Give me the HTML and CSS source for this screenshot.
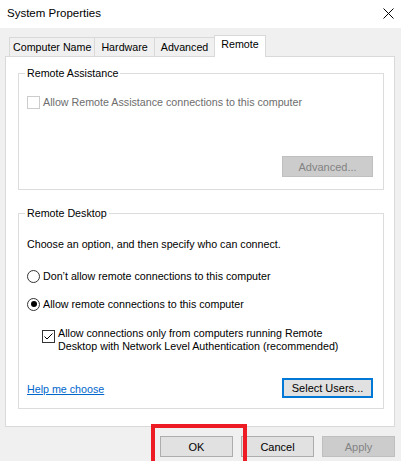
FILE: index.html
```html
<!DOCTYPE html>
<html>
<head lang="en">
    <meta charset="UTF-8">
    <title>System Properties</title>
    <link rel="stylesheet" href="styles.css">
</head>
<body>
<div id="window">
    <div class="titlebar">
        <span class="title">System Properties</span>
        <span class="close">
            <svg width="11" height="11" viewBox="0 0 11 11"><path d="M0.5 0.5L10.5 10.5M10.5 0.5L0.5 10.5" stroke="#000" stroke-width="1" fill="none"/></svg>
        </span>
    </div>
    <div class="dialog">
        <ul class="tabs">
            <li>Computer Name</li>
            <li>Hardware</li>
            <li>Advanced</li>
            <li class="active">Remote</li>
        </ul>
        <div class="panel">
            <fieldset class="group">
                <legend>Remote Assistance</legend>
                <label class="check disabled first"><span class="box"></span>Allow Remote Assistance connections to this computer</label>
                <div class="actions assist">
                    <button class="btn wide" disabled>Advanced...</button>
                </div>
            </fieldset>
            <fieldset class="group desktop">
                <legend>Remote Desktop</legend>
                <p class="hint">Choose an option, and then specify who can connect.</p>
                <label class="radio one"><span class="dot"></span>Don’t allow remote connections to this computer</label>
                <label class="radio two on"><span class="dot"></span>Allow remote connections to this computer</label>
                <label class="check sub">
                    <span class="box"><svg width="11" height="11" viewBox="0 0 11 11"><path d="M1.5 5.5L4 8L9.5 2.5" stroke="#000" stroke-width="1" fill="none"/></svg></span>
                    <span>Allow connections only from computers running Remote<br>Desktop with Network Level Authentication (recommended)</span>
                </label>
                <div class="actions users">
                    <a href="#" class="link">Help me choose</a>
                    <button class="btn wide focus">Select Users...</button>
                </div>
            </fieldset>
        </div>
        <div class="footer">
            <span class="callout"><button class="btn">OK</button></span>
            <button class="btn">Cancel</button>
            <button class="btn" disabled>Apply</button>
        </div>
    </div>
</div>
</body>
</html>
```

FILE: styles.css
```css
*{
    margin: 0;
    padding: 0;
    box-sizing: border-box;
}
body{
    background: #f0f0f0;
    font-family: "Liberation Sans", Arial, sans-serif;
    font-size: 10.7px;
    color: #000;
}
#window{
    width: 401px;
    height: 461px;
    overflow: hidden;
}
.titlebar{
    height: 28px;
    background: #fff;
    display: flex;
    align-items: center;
    justify-content: space-between;
    padding: 0 7px 2px 7px;
}
.title{
    font-size: 11.5px;
    line-height: 14px;
}
.close svg{
    display: block;
}
.dialog{
    padding: 7px 6px 0 5px;
}
.tabs{
    display: flex;
    height: 22px;
    margin: 0 0 -1px 4px;
    list-style: none;
    position: relative;
    z-index: 1;
}
.tabs li{
    height: 19px;
    margin-top: 2px;
    padding: 0 6px;
    border: 1px solid #d9d9d9;
    border-right: 0;
    border-bottom: 0;
    line-height: 18px;
    background: #f0f0f0;
}
.tabs li:first-child{
    padding: 0 3px;
}
.tabs li.active{
    height: 22px;
    margin-top: 0;
    padding: 0 6px;
    background: #fff;
    border-right: 1px solid #d9d9d9;
    line-height: 17px;
}
.panel{
    width: 390px;
    background: #fff;
    border: 1px solid #d9d9d9;
    padding: 10px 10px 17px 12px;
}
.group{
    border: 1px solid #dcdcdc;
    padding: 0 10px 12px 8px;
    min-width: 0;
}
.group legend{
    margin-left: -2px;
    padding: 0 2px;
    line-height: 12px;
}
.group.desktop{
    margin-top: 17px;
    padding-bottom: 10px;
}
.check, .radio{
    display: flex;
    align-items: center;
    line-height: 16px;
}
.check.first{
    margin-top: 15px;
}
.box, .dot{
    width: 13px;
    height: 13px;
    margin-right: 3px;
    border: 1px solid #333;
    background: #fff;
    flex: none;
}
.box svg{
    display: block;
}
.dot{
    border-radius: 50%;
    display: flex;
    align-items: center;
    justify-content: center;
}
.radio.on .dot::after{
    content: "";
    width: 6px;
    height: 6px;
    border-radius: 50%;
    background: #000;
}
.disabled{
    color: #6d6d6d;
}
.disabled .box{
    border-color: #cccccc;
}
.actions{
    display: flex;
    align-items: center;
    justify-content: flex-end;
}
.actions.assist{
    margin-top: 46px;
}
.hint{
    margin-top: 17px;
    line-height: 16px;
}
.radio.one{
    margin-top: 16px;
}
.radio.two{
    margin-top: 12px;
}
.check.sub{
    align-items: flex-start;
    margin: 15px 0 0 15px;
    line-height: 13px;
}
.check.sub .box{
    margin-top: 3px;
}
.actions.users{
    justify-content: space-between;
    margin-top: 25px;
}
.link{
    color: #0066cc;
    text-decoration: underline;
    margin-top: 2px;
}
.btn{
    width: 73px;
    height: 21px;
    background: #e1e1e1;
    border: 1px solid #adadad;
    font-family: inherit;
    font-size: 11px;
    color: #000;
}
.btn.wide{
    width: 91px;
}
.users .btn{
    height: 20px;
}
.btn.focus{
    border: 2px solid #0078d7;
}
.btn:disabled{
    background: #cccccc;
    border-color: #bfbfbf;
    color: #838383;
}
.footer{
    display: flex;
    justify-content: flex-end;
    gap: 8px;
    margin-top: 9px;
}
.callout{
    position: relative;
    display: flex;
}
.callout::after{
    content: "";
    position: absolute;
    left: -9px;
    top: -12px;
    width: 88px;
    height: 45px;
    border: 4px solid #ed1c24;
    pointer-events: none;
}
```
